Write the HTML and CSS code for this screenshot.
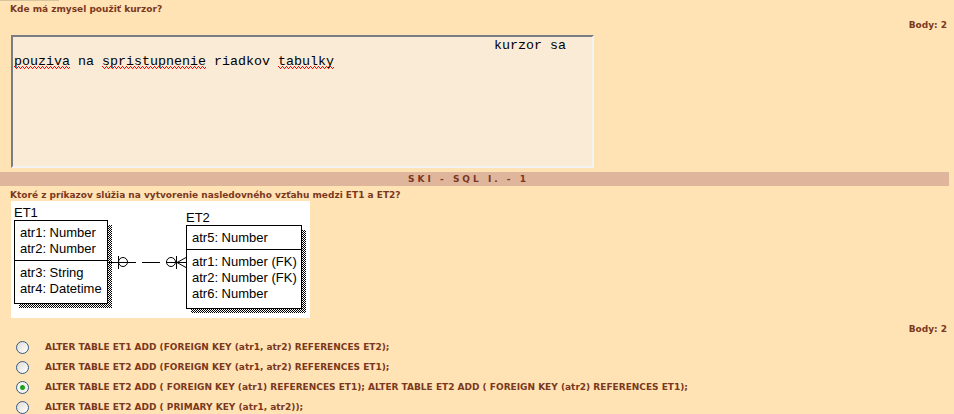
FILE: index.html
```html
<!DOCTYPE html>
<html lang="sk">
<head>
<meta charset="utf-8">
<title>SKI - SQL I.</title>
<link rel="stylesheet" href="styles.css">
</head>
<body>
<div class="top-edge"></div>
<form class="test">
  <section class="question">
    <label class="prompt" for="answer">Kde má zmysel použiť kurzor?</label>
    <p class="points">Body: 2</p>
    <div class="answer-box">
      <textarea class="answer" id="answer" spellcheck="false">                                                            kurzor sa pouziva na spristupnenie riadkov tabulky</textarea>
      <svg class="spelling" width="320" height="3" aria-hidden="true">
        <defs>
          <pattern id="wave" width="4" height="3" patternUnits="userSpaceOnUse">
            <path d="M0 0h1v1h-1zM1 1h1v1h-1zM2 2h1v1h-1zM3 1h1v1h-1z" fill="#f00" shape-rendering="crispEdges"/>
          </pattern>
        </defs>
        <path d="M0 0h56v3h-56zM88 0h104v3h-104zM264 0h56v3h-56z" fill="url(#wave)"/>
      </svg>
    </div>
  </section>
  <h2 class="bar">SKI - SQL I. - 1</h2>
  <fieldset class="question">
    <legend class="prompt">Ktoré z príkazov slúžia na vytvorenie nasledovného vzťahu medzi ET1 a ET2?</legend>
    <svg class="diagram" width="299" height="117" viewBox="11 201 299 117" role="img" aria-label="ET1, ET2">
      <defs>
        <pattern id="dither" width="2" height="2" patternUnits="userSpaceOnUse">
          <path d="M0 0h1v1h-1zM1 1h1v1h-1z" fill="#000" shape-rendering="crispEdges"/>
        </pattern>
      </defs>
      <rect x="11" y="201" width="299" height="117" fill="#fff"/>
      <path d="M19 225h93v83h-93zM191 230h115v83h-115z" fill="url(#dither)"/>
      <g fill="#fff" stroke="#000" shape-rendering="crispEdges">
        <rect x="14.500" y="220.500" width="93" height="83"/>
        <path d="M14 260.500h94"/>
        <rect x="186.500" y="225.500" width="115" height="83"/>
        <path d="M186 249.500h116"/>
        <path d="M108 262.500h28M142 262.500h18M118.500 256v13M166 262.500h20M176.500 256v13"/>
      </g>
      <g fill="none" stroke="#000">
        <circle cx="123" cy="262" r="4.500"/>
        <circle cx="171" cy="262" r="4.500"/>
        <path d="M186 257.500L177 262.500L186 267.500"/>
      </g>
      <g class="diagram-text">
        <text x="14" y="217">ET1</text>
        <text x="20" y="237">atr1: Number</text>
        <text x="20" y="253">atr2: Number</text>
        <text x="20" y="277">atr3: String</text>
        <text x="20" y="293">atr4: Datetime</text>
        <text x="186" y="222">ET2</text>
        <text x="192" y="242">atr5: Number</text>
        <text x="192" y="266">atr1: Number (FK)</text>
        <text x="192" y="282">atr2: Number (FK)</text>
        <text x="192" y="298">atr6: Number</text>
      </g>
    </svg>
    <p class="points">Body: 2</p>
    <div class="options">
      <label class="option"><input type="radio" name="q1"><span>ALTER TABLE ET1 ADD (FOREIGN KEY (atr1, atr2) REFERENCES ET2);</span></label>
      <label class="option"><input type="radio" name="q1"><span>ALTER TABLE ET2 ADD (FOREIGN KEY (atr1, atr2) REFERENCES ET1);</span></label>
      <label class="option"><input type="radio" name="q1" checked><span>ALTER TABLE ET2 ADD ( FOREIGN KEY (atr1) REFERENCES ET1); ALTER TABLE ET2 ADD ( FOREIGN KEY (atr2) REFERENCES ET1);</span></label>
      <label class="option"><input type="radio" name="q1"><span>ALTER TABLE ET2 ADD ( PRIMARY KEY (atr1, atr2));</span></label>
    </div>
  </fieldset>
</form>
</body>
</html>
```
FILE: styles.css
```css
* {
  box-sizing: border-box;
}

body {
  margin: 0;
  background: #ffe3b5;
  color: #7b3821;
  font: bold 9px/16px "DejaVu Sans", Verdana, sans-serif;
  overflow: hidden;
}

.top-edge {
  width: 59px;
  height: 1px;
  background: #d9c39c;
}

.test {
  margin-right: 5px;
}

.question {
  min-width: 0;
  margin: 0;
  padding: 0 2px 0 11px;
  border: 0;
}

.prompt {
  display: block;
  margin-left: -1px;
  padding: 0;
}

legend.prompt {
  padding-top: 4px;
  line-height: 11px;
}

.points {
  margin: 0;
  text-align: right;
}

.answer-box {
  position: relative;
  width: 583px;
  max-width: 100%;
  margin: 2px 0 4px;
}

.answer {
  display: block;
  width: 100%;
  height: 133px;
  margin: 0;
  padding: 1px 1px 0;
  border: 2px solid;
  border-color: #7b7d84 #f3f3f3 #f3f3f3 #7b7d84;
  border-radius: 0;
  background: #faebd7;
  color: #000;
  font: 10pt/16px "Liberation Mono", "Courier New", monospace;
  resize: none;
  outline: 0;
  overflow: hidden;
}

.spelling {
  position: absolute;
  left: 3px;
  top: 31px;
  pointer-events: none;
}

.bar {
  margin: 0;
  padding-right: 12px;
  background: #dfb59c;
  font-size: 9px;
  line-height: 14px;
  letter-spacing: 3px;
  text-align: center;
}

.diagram {
  display: block;
  margin-bottom: 3px;
}

.diagram-text {
  font: 13px "Liberation Sans", Arial, sans-serif;
  fill: #000;
}

.option {
  display: flex;
  align-items: center;
  height: 20px;
  padding-left: 5px;
  gap: 16px;
  white-space: nowrap;
}

.option input {
  appearance: none;
  flex: none;
  width: 13px;
  height: 13px;
  margin: 0;
  border: 1px solid #31598a;
  border-radius: 50%;
  background: linear-gradient(135deg, #dedcd5, #fff);
}

.option input:checked {
  background: radial-gradient(circle, #21a121 2px, #f3f3ef 3px);
}
```
